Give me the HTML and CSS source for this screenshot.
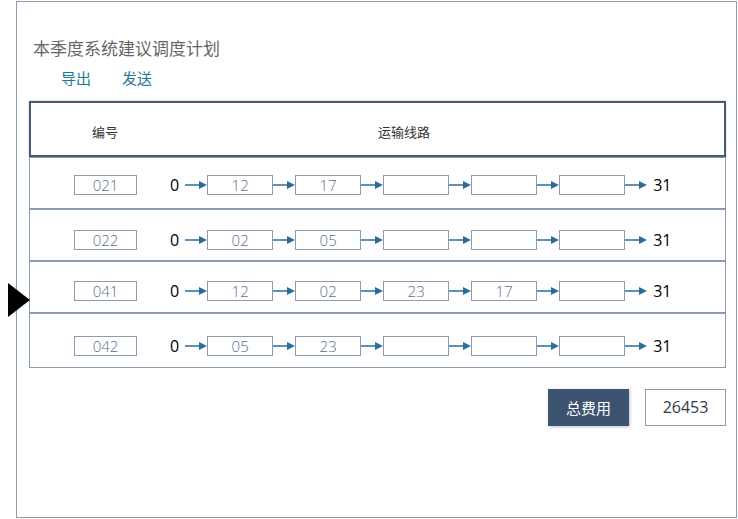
FILE: index.html
```html
<!DOCTYPE html>
<html lang="zh">
<head>
<meta charset="utf-8">
<title>本季度系统建议调度计划</title>
<link rel="stylesheet" href="styles.css">
</head>
<body>
<div class="frame">
  <h1 class="title">本季度系统建议调度计划</h1>
  <div class="actions">
    <a class="action">导出</a>
    <a class="action">发送</a>
  </div>
  <div class="table">
    <div class="thead">
      <div class="th th-id">编号</div>
      <div class="th th-route">运输线路</div>
    </div>
    <div class="row row-1">
      <div class="idbox">021</div>
      <span class="num start">0</span>
      <svg class="arrow" viewBox="0 0 22 10"><line x1="0" y1="5" x2="16" y2="5"/><polygon points="14,1 22,5 14,9"/></svg>
      <div class="node">12</div>
      <svg class="arrow" viewBox="0 0 22 10"><line x1="0" y1="5" x2="16" y2="5"/><polygon points="14,1 22,5 14,9"/></svg>
      <div class="node">17</div>
      <svg class="arrow" viewBox="0 0 22 10"><line x1="0" y1="5" x2="16" y2="5"/><polygon points="14,1 22,5 14,9"/></svg>
      <div class="node"></div>
      <svg class="arrow" viewBox="0 0 22 10"><line x1="0" y1="5" x2="16" y2="5"/><polygon points="14,1 22,5 14,9"/></svg>
      <div class="node"></div>
      <svg class="arrow" viewBox="0 0 22 10"><line x1="0" y1="5" x2="16" y2="5"/><polygon points="14,1 22,5 14,9"/></svg>
      <div class="node"></div>
      <svg class="arrow" viewBox="0 0 22 10"><line x1="0" y1="5" x2="16" y2="5"/><polygon points="14,1 22,5 14,9"/></svg>
      <span class="num end">31</span>
    </div>
    <div class="row row-2">
      <div class="idbox">022</div>
      <span class="num start">0</span>
      <svg class="arrow" viewBox="0 0 22 10"><line x1="0" y1="5" x2="16" y2="5"/><polygon points="14,1 22,5 14,9"/></svg>
      <div class="node">02</div>
      <svg class="arrow" viewBox="0 0 22 10"><line x1="0" y1="5" x2="16" y2="5"/><polygon points="14,1 22,5 14,9"/></svg>
      <div class="node">05</div>
      <svg class="arrow" viewBox="0 0 22 10"><line x1="0" y1="5" x2="16" y2="5"/><polygon points="14,1 22,5 14,9"/></svg>
      <div class="node"></div>
      <svg class="arrow" viewBox="0 0 22 10"><line x1="0" y1="5" x2="16" y2="5"/><polygon points="14,1 22,5 14,9"/></svg>
      <div class="node"></div>
      <svg class="arrow" viewBox="0 0 22 10"><line x1="0" y1="5" x2="16" y2="5"/><polygon points="14,1 22,5 14,9"/></svg>
      <div class="node"></div>
      <svg class="arrow" viewBox="0 0 22 10"><line x1="0" y1="5" x2="16" y2="5"/><polygon points="14,1 22,5 14,9"/></svg>
      <span class="num end">31</span>
    </div>
    <div class="row row-3">
      <div class="idbox">041</div>
      <span class="num start">0</span>
      <svg class="arrow" viewBox="0 0 22 10"><line x1="0" y1="5" x2="16" y2="5"/><polygon points="14,1 22,5 14,9"/></svg>
      <div class="node">12</div>
      <svg class="arrow" viewBox="0 0 22 10"><line x1="0" y1="5" x2="16" y2="5"/><polygon points="14,1 22,5 14,9"/></svg>
      <div class="node">02</div>
      <svg class="arrow" viewBox="0 0 22 10"><line x1="0" y1="5" x2="16" y2="5"/><polygon points="14,1 22,5 14,9"/></svg>
      <div class="node">23</div>
      <svg class="arrow" viewBox="0 0 22 10"><line x1="0" y1="5" x2="16" y2="5"/><polygon points="14,1 22,5 14,9"/></svg>
      <div class="node">17</div>
      <svg class="arrow" viewBox="0 0 22 10"><line x1="0" y1="5" x2="16" y2="5"/><polygon points="14,1 22,5 14,9"/></svg>
      <div class="node"></div>
      <svg class="arrow" viewBox="0 0 22 10"><line x1="0" y1="5" x2="16" y2="5"/><polygon points="14,1 22,5 14,9"/></svg>
      <span class="num end">31</span>
    </div>
    <div class="row row-4">
      <div class="idbox">042</div>
      <span class="num start">0</span>
      <svg class="arrow" viewBox="0 0 22 10"><line x1="0" y1="5" x2="16" y2="5"/><polygon points="14,1 22,5 14,9"/></svg>
      <div class="node">05</div>
      <svg class="arrow" viewBox="0 0 22 10"><line x1="0" y1="5" x2="16" y2="5"/><polygon points="14,1 22,5 14,9"/></svg>
      <div class="node">23</div>
      <svg class="arrow" viewBox="0 0 22 10"><line x1="0" y1="5" x2="16" y2="5"/><polygon points="14,1 22,5 14,9"/></svg>
      <div class="node"></div>
      <svg class="arrow" viewBox="0 0 22 10"><line x1="0" y1="5" x2="16" y2="5"/><polygon points="14,1 22,5 14,9"/></svg>
      <div class="node"></div>
      <svg class="arrow" viewBox="0 0 22 10"><line x1="0" y1="5" x2="16" y2="5"/><polygon points="14,1 22,5 14,9"/></svg>
      <div class="node"></div>
      <svg class="arrow" viewBox="0 0 22 10"><line x1="0" y1="5" x2="16" y2="5"/><polygon points="14,1 22,5 14,9"/></svg>
      <span class="num end">31</span>
    </div>
  </div>
  <div class="footer">
    <button class="total-btn">总费用</button>
    <div class="total-value">26453</div>
  </div>
</div>
<div class="pointer"></div>
</body>
</html>
```

FILE: styles.css
```css
html, body {
  margin: 0;
  padding: 0;
  background: #ffffff;
}

body {
  font-family: "Open Sans", "Noto Sans CJK SC", sans-serif;
  position: relative;
  width: 738px;
  height: 519px;
  overflow: hidden;
}

.frame {
  margin: 1px 0 0 16px;
  width: 719px;
  height: 515px;
  border: 1px solid #8c9bb0;
}

.title {
  margin: 34px 0 0 16px;
  font-family: "Noto Sans CJK SC", sans-serif;
  font-size: 17px;
  font-weight: 400;
  line-height: 24px;
  color: #666666;
}

.actions {
  display: flex;
  gap: 31px;
  margin: 8px 0 0 44px;
}

.action {
  font-family: "Noto Sans CJK SC", sans-serif;
  font-size: 15px;
  line-height: 20px;
  color: #1f7896;
  cursor: pointer;
}

.table {
  margin: 13px 0 0 12px;
  width: 697px;
}

.thead {
  display: flex;
  align-items: center;
  height: 56px;
  box-sizing: border-box;
  border: 2px solid #4a5a70;
  box-shadow: 0 0 1px rgba(40, 55, 75, 0.6);
  padding-top: 4px;
  font-family: "Noto Sans CJK SC", sans-serif;
  font-size: 13px;
  color: #333333;
}

.th {
  text-align: center;
}

.th-id {
  width: 148px;
}

.th-route {
  width: 450px;
}

.row {
  display: flex;
  align-items: flex-start;
  box-sizing: border-box;
  height: 52px;
  border: 1px solid #8c9bb0;
  padding: 17px 0 0 44px;
}

.row-2 {
  padding-top: 20px;
}

.row-3 {
  padding-top: 19px;
}

.row-4 {
  height: 55px;
  padding-top: 22px;
}

.idbox,
.node {
  box-sizing: border-box;
  height: 20px;
  border: 1px solid #8c9bb0;
  text-align: center;
  font-size: 15px;
  font-weight: 300;
  line-height: 18px;
  color: #5d6e8a;
}

.idbox {
  width: 63px;
}

.node {
  width: 66px;
}

.num {
  font-size: 16px;
  line-height: 20px;
  color: #000000;
}

.start {
  margin: 0 6px 0 33px;
}

.end {
  margin-left: 6px;
}

.arrow {
  width: 22px;
  height: 10px;
  margin-top: 5px;
  flex: none;
}

.arrow line {
  stroke: #2d6d9b;
  stroke-width: 1.5;
}

.arrow polygon {
  fill: #2d6d9b;
}

.footer {
  display: flex;
  justify-content: flex-end;
  gap: 16px;
  width: 697px;
  margin: 21px 0 0 12px;
}

.total-btn {
  width: 81px;
  height: 37px;
  border: none;
  background: #3d5470;
  box-shadow: 1px 1px 3px rgba(0, 0, 0, 0.25);
  color: #ffffff;
  font-family: "Noto Sans CJK SC", sans-serif;
  font-size: 15px;
  padding: 0;
}

.total-value {
  box-sizing: border-box;
  width: 81px;
  height: 37px;
  border: 1px solid #8c9bb0;
  text-align: center;
  font-size: 16px;
  line-height: 35px;
  color: #333c4a;
}

.pointer {
  position: absolute;
  left: 8px;
  top: 283px;
  width: 0;
  height: 0;
  border-left: 22px solid #000000;
  border-top: 17px solid transparent;
  border-bottom: 17px solid transparent;
}
```
